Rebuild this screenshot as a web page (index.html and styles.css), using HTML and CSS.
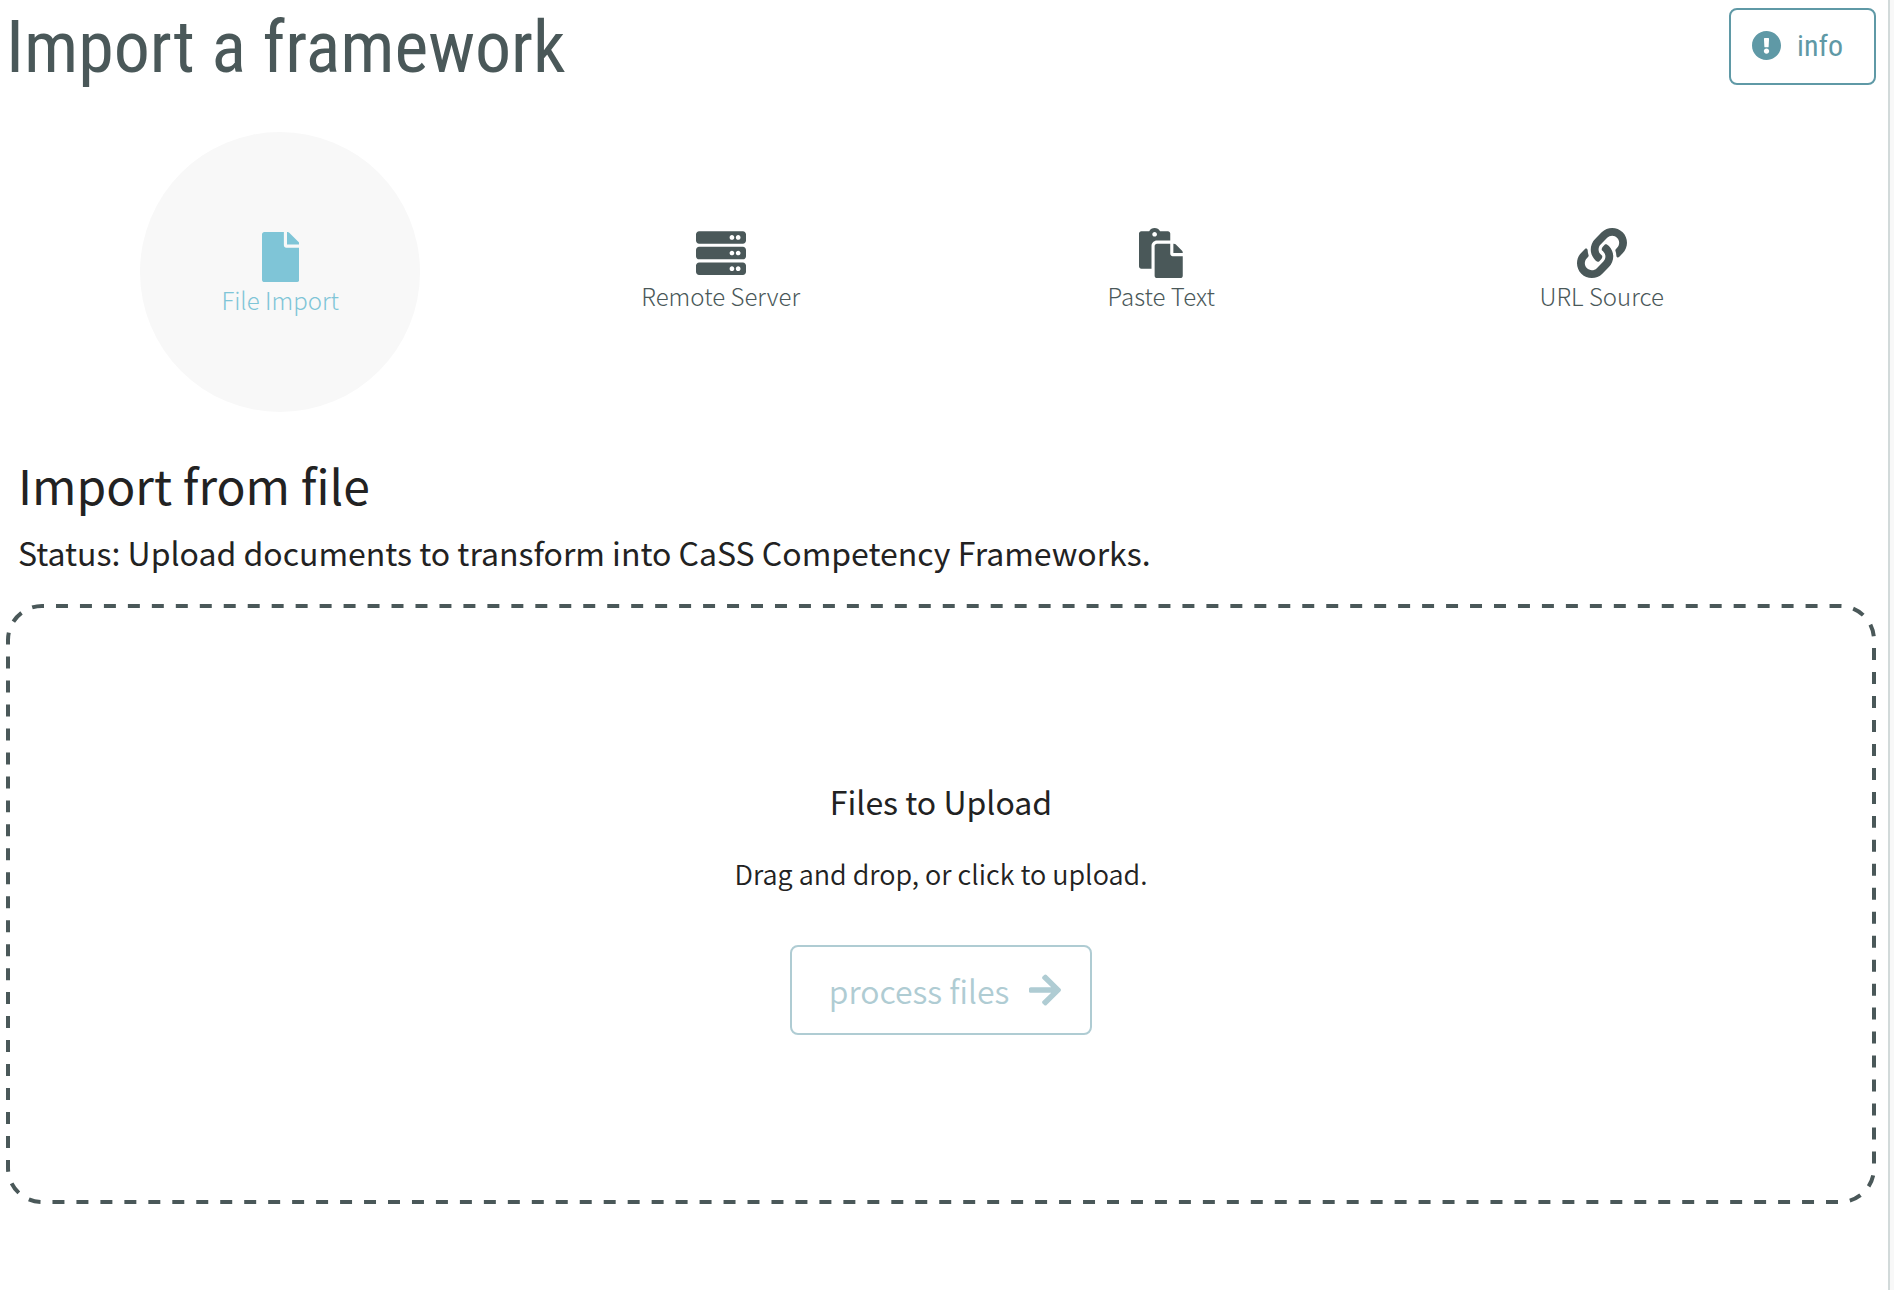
FILE: index.html
```html
<!DOCTYPE html>
<html lang="en">
<head>
<meta charset="utf-8">
<title>Import a framework</title>
<meta name="viewport" content="width=device-width, initial-scale=1">
<link rel="stylesheet" href="styles.css">
</head>
<body>
<main class="page">
  <header class="page-header">
    <h1 class="page-title">Import a framework</h1>
    <button type="button" class="button info-button">
      <svg class="info-icon" viewBox="8 8 496 496" aria-hidden="true"><path d="M504 256c0 136.997-111.043 248-248 248S8 392.997 8 256C8 119.083 119.043 8 256 8s248 111.083 248 248zm-248 50c-25.405 0-46 20.595-46 46s20.595 46 46 46 46-20.595 46-46-20.595-46-46-46zm-43.673-165.346l7.418 136c.347 6.364 5.609 11.346 11.982 11.346h48.546c6.373 0 11.635-4.982 11.982-11.346l7.418-136c.375-6.874-5.098-12.654-11.982-12.654h-63.383c-6.884 0-12.356 5.78-11.981 12.654z"/></svg>
      <span>info</span>
    </button>
  </header>

  <nav class="sources" aria-label="Import source">
    <a class="source source-active" href="#file">
      <svg class="source-icon" viewBox="0 0 384 512" aria-hidden="true"><path d="M224 136V0H24C10.700 0 0 10.700 0 24v464c0 13.300 10.700 24 24 24h336c13.300 0 24-10.700 24-24V160H248c-13.200 0-24-10.800-24-24zm160-14.100v6.100H256V0h6.100c6.400 0 12.500 2.500 17 7l97.900 98c4.500 4.500 7 10.600 7 16.900z"/></svg>
      <span>File Import</span>
    </a>
    <a class="source" href="#server">
      <svg class="source-icon" viewBox="0 0 512 512" aria-hidden="true"><path d="M480 160H32c-17.673 0-32-14.327-32-32V64c0-17.673 14.327-32 32-32h448c17.673 0 32 14.327 32 32v64c0 17.673-14.327 32-32 32zm-48-88c-13.255 0-24 10.745-24 24s10.745 24 24 24 24-10.745 24-24-10.745-24-24-24zm-64 0c-13.255 0-24 10.745-24 24s10.745 24 24 24 24-10.745 24-24-10.745-24-24-24zm112 248H32c-17.673 0-32-14.327-32-32v-64c0-17.673 14.327-32 32-32h448c17.673 0 32 14.327 32 32v64c0 17.673-14.327 32-32 32zm-48-88c-13.255 0-24 10.745-24 24s10.745 24 24 24 24-10.745 24-24-10.745-24-24-24zm-64 0c-13.255 0-24 10.745-24 24s10.745 24 24 24 24-10.745 24-24-10.745-24-24-24zm112 248H32c-17.673 0-32-14.327-32-32v-64c0-17.673 14.327-32 32-32h448c17.673 0 32 14.327 32 32v64c0 17.673-14.327 32-32 32zm-48-88c-13.255 0-24 10.745-24 24s10.745 24 24 24 24-10.745 24-24-10.745-24-24-24zm-64 0c-13.255 0-24 10.745-24 24s10.745 24 24 24 24-10.745 24-24-10.745-24-24-24z"/></svg>
      <span>Remote Server</span>
    </a>
    <a class="source" href="#text">
      <svg class="source-icon" viewBox="0 0 448 512" aria-hidden="true"><path d="M128 184c0-30.879 25.122-56 56-56h136V56c0-13.255-10.745-24-24-24h-80.610C204.306 12.890 183.637 0 160 0s-44.306 12.890-55.390 32H24C10.745 32 0 42.745 0 56v336c0 13.255 10.745 24 24 24h104V184zm32-144c13.255 0 24 10.745 24 24s-10.745 24-24 24-24-10.745-24-24 10.745-24 24-24zm184 248h104v200c0 13.255-10.745 24-24 24H184c-13.255 0-24-10.745-24-24V184c0-13.255 10.745-24 24-24h136v104c0 13.200 10.800 24 24 24zm104-38.059V256h-96v-96h6.059a24 24 0 0 1 16.970 7.029l65.941 65.941a24.002 24.002 0 0 1 7.030 16.971z"/></svg>
      <span>Paste Text</span>
    </a>
    <a class="source" href="#url">
      <svg class="source-icon" viewBox="0 0 512 512" aria-hidden="true"><path d="M326.612 185.391c59.747 59.809 58.927 155.698.36 214.590-.11.120-.24.250-.36.370l-67.200 67.200c-59.270 59.270-155.699 59.262-214.960 0-59.270-59.260-59.270-155.700 0-214.960l37.106-37.106c9.840-9.840 26.786-3.300 27.294 10.606.648 17.722 3.826 35.527 9.690 52.721 1.986 5.822.567 12.262-3.783 16.612l-13.087 13.087c-28.026 28.026-28.905 73.660-1.155 101.960 28.024 28.579 74.086 28.749 102.325.510l67.200-67.190c28.191-28.191 28.073-73.757 0-101.830-3.701-3.694-7.429-6.564-10.341-8.569a16.037 16.037 0 0 1-6.947-12.606c-.396-10.567 3.348-21.456 11.698-29.806l21.054-21.055c5.521-5.521 14.182-6.199 20.584-1.731a152.482 152.482 0 0 1 20.522 17.197zM467.547 44.449c-59.261-59.262-155.690-59.270-214.960 0l-67.200 67.200c-.12.120-.25.250-.36.370-58.566 58.892-59.387 154.781.36 214.590a152.454 152.454 0 0 0 20.521 17.196c6.402 4.468 15.064 3.789 20.584-1.731l21.054-21.055c8.350-8.350 12.094-19.239 11.698-29.806a16.037 16.037 0 0 0-6.947-12.606c-2.912-2.005-6.640-4.875-10.341-8.569-28.073-28.073-28.191-73.639 0-101.830l67.200-67.190c28.239-28.239 74.300-28.069 102.325.510 27.750 28.300 26.872 73.934-1.155 101.960l-13.087 13.087c-4.350 4.350-5.769 10.790-3.783 16.612 5.864 17.194 9.042 34.999 9.690 52.721.509 13.906 17.454 20.446 27.294 10.606l37.106-37.106c59.271-59.259 59.271-155.699.001-214.959z"/></svg>
      <span>URL Source</span>
    </a>
  </nav>

  <section class="intro">
    <h2 class="intro-title">Import from file</h2>
    <p class="intro-status">Status: Upload documents to transform into CaSS Competency Frameworks.</p>
  </section>

  <section class="dropzone">
    <svg class="dropzone-outline" aria-hidden="true"><rect x="2" y="2" rx="34" pathLength="4872"/></svg>
    <h3 class="dropzone-title">Files to Upload</h3>
    <p class="dropzone-hint">Drag and drop, or click to upload.</p>
    <button type="button" class="button process-button">
      <span>process files</span>
      <svg class="arrow-icon" viewBox="0 32 448 448" aria-hidden="true"><path d="M190.500 66.900l22.200-22.200c9.400-9.400 24.600-9.400 33.900 0L441 239c9.400 9.400 9.400 24.600 0 33.900L246.600 467.300c-9.400 9.400-24.600 9.400-33.900 0l-22.200-22.200c-9.500-9.500-9.300-25 .4-34.300L311.400 296H24c-13.300 0-24-10.700-24-24v-32c0-13.300 10.700-24 24-24h287.400L190.900 101.200c-9.800-9.300-10-24.800-.4-34.300z"/></svg>
    </button>
  </section>
</main>
</body>
</html>
```
FILE: styles.css
```css
:root {
  --slate: #4a5859;
  --ink: #222;
  --teal: #5f99a6;
  --teal-faded: #afccd3;
  --sky: #7fc5d7;
  --body-font: "Source Sans Pro", "Noto Sans CJK SC", sans-serif;
  --display-font: "Roboto Condensed", "Liberation Sans Narrow", Roboto, sans-serif;
}

* {
  box-sizing: border-box;
}

body {
  margin: 0;
  background: #f8f8f8;
  color: var(--ink);
  font-family: var(--body-font);
}

h1,
h2,
h3,
p {
  margin: 0;
  font-weight: 400;
}

svg {
  display: block;
  fill: currentColor;
}

.page {
  min-height: 100vh;
  margin-right: 4px;
  padding: 8px 12px 24px 6px;
  border-right: 2px solid #d2dada;
  background: #fff;
}

.page-header {
  display: flex;
  align-items: flex-start;
  justify-content: space-between;
}

.page-title {
  color: var(--slate);
  font-family: var(--display-font);
  font-size: 72px;
  line-height: 80px;
}

.button {
  display: flex;
  align-items: center;
  border: 2px solid currentColor;
  border-radius: 8px;
  background: #fff;
}

.info-button {
  gap: 16px;
  height: 77px;
  padding: 0 31px 2px 21px;
  color: var(--teal);
  font-family: var(--display-font);
  font-size: 30px;
}

.info-icon {
  width: 29px;
  height: 29px;
}

.sources {
  display: grid;
  grid-template-columns: repeat(4, 1fr);
  align-items: center;
  justify-items: center;
  margin-top: 44px;
  padding: 0 54px;
}

.source {
  display: flex;
  flex-direction: column;
  align-items: center;
  justify-content: center;
  padding-bottom: 2px;
  color: var(--slate);
  font-size: 24px;
  font-weight: 300;
  line-height: 36px;
  text-decoration: none;
}

.source-active {
  width: 280px;
  height: 280px;
  padding-top: 8px;
  border-radius: 50%;
  background: #f8f8f8;
  color: var(--sky);
}

.source-icon {
  height: 50px;
}

.intro {
  padding: 38px 12px 18px;
}

.intro-title {
  font-size: 48px;
  line-height: 68px;
}

.intro-status {
  font-size: 32px;
  line-height: 68px;
}

.dropzone {
  position: relative;
  display: flex;
  flex-direction: column;
  align-items: center;
  justify-content: center;
  min-height: 600px;
  padding-bottom: 10px;
}

.dropzone-outline {
  position: absolute;
  inset: 0;
  width: 100%;
  height: 100%;
  pointer-events: none;
}

.dropzone-outline rect {
  width: calc(100% - 4px);
  height: calc(100% - 4px);
  fill: none;
  stroke: var(--slate);
  stroke-width: 4px;
  stroke-dasharray: 12 12;
  stroke-dashoffset: 10px;
}

.dropzone-title {
  font-size: 32px;
  line-height: 74px;
}

.dropzone-hint {
  font-size: 27px;
  font-weight: 350;
  line-height: 72px;
}

.process-button {
  gap: 20px;
  height: 90px;
  margin-top: 35px;
  padding: 0 29px 0 37px;
  color: var(--teal-faded);
  font-family: var(--body-font);
  font-size: 32px;
  font-weight: 350;
}

.arrow-icon {
  width: 32px;
  height: 32px;
}
```
